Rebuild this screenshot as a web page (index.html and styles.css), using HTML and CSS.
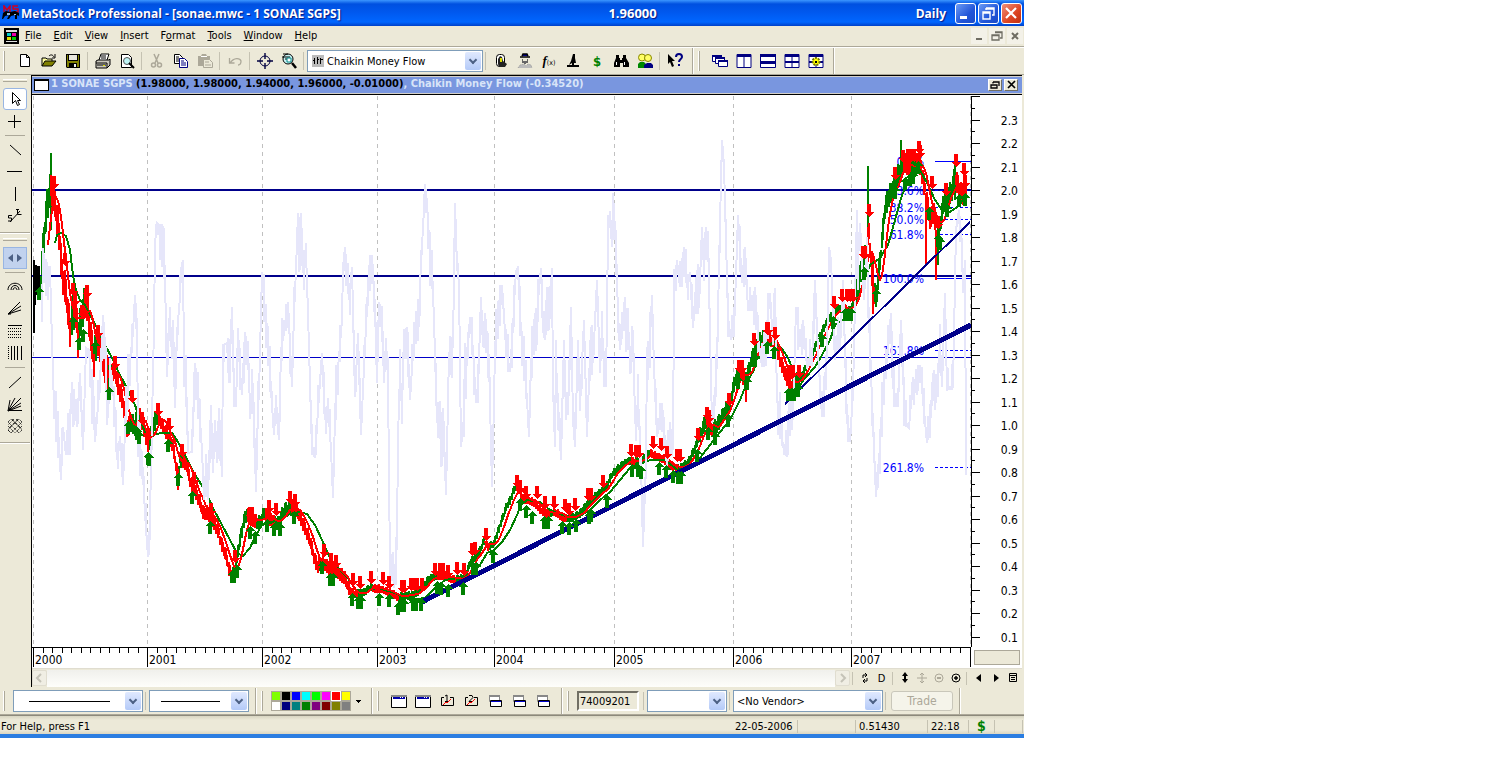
FILE: index.html
```html
<!DOCTYPE html>
<html lang="en">
<head>
	<meta charset="utf-8">
	<title>MetaStock Professional - [sonae.mwc - 1 SONAE SGPS]</title>
	<link rel="stylesheet" href="styles.css">
</head>
<body>
<div class="app">

	<!-- Title bar -->
	<header class="titlebar">
		<svg class="logo" viewBox="0 0 18 16"><path d="M2 7V1l3 4 3-4v6M16 1h-5v3h5v3h-5" fill="none" stroke="#d00020" stroke-width="1.500"/><path d="M1 8l3-2 4 1 5-1 4 2v3l-2-1v4h-2v-4l-4 1-2 3H5l2-4-4 1-2 3H0z" fill="#000"/><path d="M5 8h3v2H5zM12 9h2v1h-2z" fill="#9bd"/></svg>
		<h1>MetaStock Professional - [sonae.mwc - 1 SONAE SGPS]</h1>
		<span class="lastprice">1.96000</span>
		<span class="period">Daily</span>
		<div class="winbuttons">
			<button aria-label="Minimize"><svg viewBox="0 0 19 19"><path d="M4 12h7v3H4z" fill="#fff"/></svg></button>
			<button aria-label="Restore"><svg viewBox="0 0 19 19"><path d="M7 4h8v7h-2M7 4v2M7 5h8M4 8h7v7H4zM4 9h7" fill="none" stroke="#fff" stroke-width="1.4"/></svg></button>
			<button class="close" aria-label="Close"><svg viewBox="0 0 19 19"><path d="M4 4l10 10M14 4L4 14" stroke="#fff" stroke-width="2.2"/></svg></button>
		</div>
	</header>

	<!-- Menu -->
	<nav class="menubar">
		<svg class="docicon" viewBox="0 0 15 16"><path d="M0 0h15v16H0z" fill="#000"/><path d="M2 2h11v2H2zM2 13h11v1H2z" fill="#ddd"/><path d="M3 5h4v3H3z" fill="#0cc"/><path d="M8 5h4v3H8z" fill="#e0a"/><path d="M3 9h4v3H3z" fill="#dd0"/><path d="M8 9h4v3H8z" fill="#0c0"/></svg>
		<a href="#"><u>F</u>ile</a>
		<a href="#"><u>E</u>dit</a>
		<a href="#"><u>V</u>iew</a>
		<a href="#"><u>I</u>nsert</a>
		<a href="#">F<u>o</u>rmat</a>
		<a href="#"><u>T</u>ools</a>
		<a href="#"><u>W</u>indow</a>
		<a href="#"><u>H</u>elp</a>
		<div class="docbuttons">
			<button aria-label="Minimize document"><svg viewBox="0 0 16 16"><path d="M5 10h6v2H5z" fill="#6f6d63"/></svg></button>
			<button aria-label="Restore document"><svg viewBox="0 0 16 16"><path d="M6 4h7v6h-2M3 7h7v5H3zM6 4.500h7M3 7.500h7" fill="none" stroke="#6f6d63" stroke-width="1.300"/></svg></button>
			<button aria-label="Close document"><svg viewBox="0 0 16 16"><path d="M5 5l6 6M11 5l-6 6" stroke="#6f6d63" stroke-width="2"/></svg></button>
		</div>
	</nav>

	<!-- Main toolbar -->
	<div class="toolbar">
		<i class="grip"></i>
		<button aria-label="New"><svg viewBox="0 0 16 16"><path d="M3.500 1.500h6l3 3v9h-9zM9.500 1.500v3h3" fill="#fff" stroke="#000"/></svg></button>
		<button aria-label="Open"><svg viewBox="0 0 16 16"><path d="M1 13V5h4l1 1h5v2" fill="#ffffa0" stroke="#000"/><path d="M1 13l3-5h11l-4 5z" fill="#808000" stroke="#000"/><path d="M8 3c2-2 4-1 5 1M14 1v4h-3" fill="none" stroke="#000"/></svg></button>
		<button aria-label="Save"><svg viewBox="0 0 16 16"><path d="M1 1h14v14H2l-1-1z" fill="#000"/><path d="M2 2h1v6h10V2h1v12H2z" fill="#808000"/><path d="M4 2h8v5H4z" fill="#e8e6dc"/><path d="M4 10h8v4H4z" fill="#000"/><path d="M9 11h2v3H9z" fill="#eee"/></svg></button>
		<i class="sep"></i>
		<button aria-label="Print"><svg viewBox="0 0 16 16"><path d="M4 7l2-6h8l-2 6" fill="#fff" stroke="#000"/><path d="M6 3h5M6 5h5" stroke="#000"/><path d="M1 8l2-1h11l1-1v6l-3 3H1z" fill="#c8c6bc" stroke="#000"/><path d="M1 10h11v5M2 12h9" fill="none" stroke="#000"/><path d="M8 12h2v1H8z" fill="#dd0"/></svg></button>
		<button aria-label="Print preview"><svg viewBox="0 0 16 16"><path d="M2.500 1.500h7l3 3v10h-10z" fill="#fff" stroke="#000"/><circle cx="8" cy="8" r="3.500" fill="#bff4f4" stroke="#555"/><path d="M10 10l5 5" stroke="#000" stroke-width="2"/></svg></button>
		<i class="sep"></i>
		<button aria-label="Cut" disabled><svg viewBox="0 0 16 16"><path d="M5 1l4 9M10 1L6 10" stroke="#aca899" stroke-width="1.500"/><circle cx="4.500" cy="12" r="2" fill="none" stroke="#aca899" stroke-width="1.500"/><circle cx="10.500" cy="12" r="2" fill="none" stroke="#aca899" stroke-width="1.500"/></svg></button>
		<button aria-label="Copy"><svg viewBox="0 0 16 16"><path d="M1.500 1.500h5l3 3v6h-8z" fill="#fff" stroke="#000"/><path d="M3 4h3M3 6h4M3 8h4" stroke="#000"/><path d="M6.500 5.500h5l3 3v6h-8z" fill="#fff" stroke="#000080"/><path d="M8 8h3M8 10h5M8 12h5" stroke="#000080"/></svg></button>
		<button aria-label="Paste" disabled><svg viewBox="0 0 16 16"><path d="M1 3h3l1-2h4l1 2h3v10H1z" fill="#aca899"/><path d="M4 3h6v1H4z" fill="#fff"/><path d="M6.500 6.500h6l3 3v5h-9z" fill="#ece9d8" stroke="#aca899"/><path d="M8 9h4M8 12h6" stroke="#aca899"/></svg></button>
		<i class="sep"></i>
		<button aria-label="Undo" disabled><svg viewBox="0 0 16 16"><path d="M2.500 5v5h5M3 10c4-6 10-5 11-2 0 3-1 4-3 4" fill="none" stroke="#aca899" stroke-width="1.300"/></svg></button>
		<i class="sep"></i>
		<button aria-label="Choose period"><svg viewBox="0 0 16 16"><circle cx="8" cy="8" r="5" fill="none" stroke="#000040"/><path d="M8 0v6M8 10v6M0 8h6M10 8h6" stroke="#000040" stroke-width="1.400"/></svg></button>
		<button aria-label="Zoom chart"><svg viewBox="0 0 16 16"><circle cx="7" cy="6" r="5" fill="#c8f4f4" stroke="#000"/><path d="M2 1h5M1 4h8M4 6h6" stroke="#000"/><path d="M6 5h4v4H6z" fill="#fff" stroke="#088"/><path d="M11 10l4 5" stroke="#000" stroke-width="2.500"/></svg></button>
		<i class="sep"></i>
		<label class="combo indicator">
			<svg class="comboicon" viewBox="0 0 12 12"><path d="M0 0h12v12H0z" fill="#bbb"/><path d="M2.500 3v6M5.500 2v7M8.500 3v6M1 5.500h1M5 4.500h2M8 4.500h3" stroke="#000"/></svg>
			<select aria-label="Indicator"><option>Chaikin Money Flow</option></select>
		</label>
		<i class="sep"></i>
		<button aria-label="Expert advisor"><svg viewBox="0 0 16 16"><rect x="3.500" y="1.500" width="8" height="12" rx="3" fill="#fff" stroke="#000"/><path d="M5 6l2-3 2 1 1 4 4 3-2 3H6l-1-3z" fill="#222"/><path d="M7 5h2v4H7z" fill="#dd0"/></svg></button>
		<button aria-label="Explorer"><svg viewBox="0 0 16 16"><path d="M3 4h10M5 3l1-2h4l1 2" fill="#000080" stroke="#000" stroke-width="1.500"/><path d="M5 6h1v2h4V6h1v4H9v1H7v-1H5z" fill="#666"/><path d="M1 15l2-3 4-1 2 2 2-2 3 1 1 3" fill="#bbb" stroke="#999" stroke-dasharray="1 1"/></svg></button>
		<button aria-label="Indicator builder" class="fx"><em>f</em><small>(x)</small></button>
		<button aria-label="System tester"><svg viewBox="0 0 16 16"><path d="M8 1h2v4l1 5H7l-3 2 2-4zM2 14v-2h5v-2h2v2h5v2z" fill="#000"/></svg></button>
		<button aria-label="Online data" class="dollar">$</button>
		<button aria-label="Find"><svg viewBox="0 0 16 16"><path d="M3 2h3v3h1v2h2V5h1V2h3v3l3 5v4h-6v-4H7v4H1v-4l2-5z" fill="#000"/><path d="M3 9h1v3H3zM11 9h1v3h-1z" fill="#fff"/></svg></button>
		<button aria-label="Community"><svg viewBox="0 0 16 16"><circle cx="5" cy="4.500" r="3.500" fill="#ff6" stroke="#880"/><circle cx="11" cy="5" r="3.500" fill="#ff6" stroke="#880"/><path d="M1 15v-4l2-2h4l2 2v4z" fill="#080"/><path d="M7 15v-3l3-2h4l2 2v3z" fill="#000080"/></svg></button>
		<i class="sep"></i>
		<button aria-label="Context help"><svg viewBox="0 0 16 16"><path d="M1 1l7 7H5l2 5-2 1-2-5-2 2z" fill="#000"/><path d="M9 4c0-4 6-4 6 0 0 2-3 2-3 5M12 11v2" fill="none" stroke="#000080" stroke-width="2"/></svg></button>
		<i class="divider"></i>
		<i class="grip"></i>
		<button aria-label="Cascade"><svg viewBox="0 0 16 16"><path d="M.5 2.500h9v6h-9z" fill="#fff" stroke="#000080"/><path d="M0 2h10v2H0z" fill="#000080"/><path d="M3.500 4.500h9v6h-9z" fill="#fff" stroke="#000080"/><path d="M3 4h10v2H3z" fill="#000080"/><path d="M6.500 7.500h9v6h-9z" fill="#fff" stroke="#000080"/><path d="M6 7h10v2H6z" fill="#000080"/></svg></button>
		<button aria-label="Tile columns"><svg viewBox="0 0 16 16"><path d="M1 1.500h14v13H1zM8 2v12" fill="#fff" stroke="#000080"/><path d="M1 1h14v3H1z" fill="#000080"/></svg></button>
		<button aria-label="Tile rows"><svg viewBox="0 0 16 16"><path d="M.5 1.500h15v13H.5z" fill="#fff" stroke="#000080"/><path d="M0 1h16v3H0zM0 8h16v3H0z" fill="#000080"/></svg></button>
		<button aria-label="Tile grid"><svg viewBox="0 0 16 16"><path d="M1 1.500h14v13H1zM8 2v12" fill="#fff" stroke="#000080"/><path d="M1 1h14v3H1zM1 8h14v2H1z" fill="#000080"/></svg></button>
		<button aria-label="Layout options"><svg viewBox="0 0 16 16"><path d="M1 1.500h14v13H1zM8 2v12" fill="#fff" stroke="#000080"/><path d="M1 1h14v3H1zM1 8h14v2H1z" fill="#000080"/><circle cx="8" cy="8.500" r="3.500" fill="#ff0" stroke="#770" stroke-width="2" stroke-dasharray="2 1"/><path d="M7 8h2v2H7z" fill="#000"/></svg></button>
		<i class="divider"></i>
	</div>

	<div class="workspace">

		<!-- Drawing tools -->
		<aside class="tools">
			<i class="hgrip"></i>
			<button class="active" aria-label="Pointer"><svg viewBox="0 0 16 16"><path d="M5.500 1.500v11l3-3 2 5 2-1-2-4h3z" fill="#fff" stroke="#000"/></svg></button>
			<button aria-label="Crosshair"><svg viewBox="0 0 16 16"><path d="M7.500 2v13M1 8.500h13" stroke="#000"/></svg></button>
			<i class="hsep"></i>
			<button aria-label="Trendline down"><svg viewBox="0 0 16 16"><path d="M3 3l11 10" stroke="#000"/></svg></button>
			<button aria-label="Horizontal line"><svg viewBox="0 0 16 16"><path d="M0 7.500h15" stroke="#000"/></svg></button>
			<button aria-label="Vertical line"><svg viewBox="0 0 16 16"><path d="M8.500 1v14" stroke="#000"/></svg></button>
			<button aria-label="Stop loss"><svg viewBox="0 0 16 16"><path d="M3 14L13 3M5 7.500H1.500v2.500h3v3H1M10.500 1v5.500h4M9 1.500h3" fill="none" stroke="#000"/></svg></button>
			<i class="hdivider"></i>
			<i class="hgrip"></i>
			<button class="pressed" aria-label="Pan"><svg viewBox="0 0 16 16"><path d="M6 4v8L1 8zM10 4v8l5-4z" fill="#4d6185"/></svg></button>
			<i class="hsep"></i>
			<button aria-label="Fibonacci arcs"><svg viewBox="0 0 16 16"><path d="M1 11c0-9 14-9 14 0M4 11c0-6 8-6 8 0M6 11c0-3 4-3 4 0" fill="none" stroke="#000"/></svg></button>
			<button aria-label="Fibonacci fan"><svg viewBox="0 0 16 16"><path d="M1 13L13 1M1 13l13-8M1 13l13-4M1 13h3" stroke="#000"/></svg></button>
			<button aria-label="Fibonacci retracement"><svg viewBox="0 0 16 16"><path d="M1 2.500h14" stroke="#000"/><path d="M1 5.500h14M1 8.500h14M1 11.500h14M1 14.500h14" stroke="#000" stroke-dasharray="1 1"/></svg></button>
			<button aria-label="Time zones"><svg viewBox="0 0 16 16"><path d="M1.500 1v14" stroke="#000" stroke-dasharray="1 1"/><path d="M4.500 1v14M7.500 1v14M10.500 1v14M14.500 1v14" stroke="#000"/></svg></button>
			<i class="hsep"></i>
			<button aria-label="Gann line"><svg viewBox="0 0 16 16"><path d="M2 14L14 3" stroke="#000"/></svg></button>
			<button aria-label="Gann fan"><svg viewBox="0 0 16 16"><path d="M1 15L3 4M1 15L8 2M1 15L14 2M1 15l13-8M1 15l13-5M1 14.500h14" stroke="#000"/></svg></button>
			<button aria-label="Gann grid"><svg viewBox="0 0 16 16"><path d="M1 4l3-3 11 11-3 3L1 4M5 1l10 10M1 8l7 7M1 12l3 3M9 1l6 6M15 4l-3-3L1 12l3 3L15 4M11 1L1 11M15 8l-7 7M7 1L1 7" fill="none" stroke="#000" stroke-dasharray="1 1"/></svg></button>
			<i class="hdivider"></i>
		</aside>

		<!-- Chart window -->
		<main class="mdi">
			<div class="charttitle">
				<i class="wicon"></i>
				<h2>1 SONAE SGPS <b>(1.98000, 1.98000, 1.94000, 1.96000, -0.01000)</b>, Chaikin Money Flow (-0.34520)</h2>
				<button aria-label="Restore chart"><svg viewBox="0 0 12 10"><path d="M4 2h6v4M2 5h6v3H2zM4 3.500V2" fill="none" stroke="#000" stroke-width="1.300"/></svg></button>
				<button aria-label="Close chart"><svg viewBox="0 0 12 10"><path d="M3 1l7 7M10 1L3 8" stroke="#000" stroke-width="1.700"/></svg></button>
			</div>

			<svg id="chart" class="chart" viewBox="32 95 990 573">
				<g id="grid"></g>
				<path class="level" d="M32 190H971M32 276H971"/>
				<path class="zero" d="M32 357.500H971"/>
				<g id="fib"></g>
				<g id="prices"></g>
				<g id="flow"></g>
				<path class="trendthin" d="M785 404L970 222"/>
				<path class="trend" d="M420 603L971 325"/>
				<g id="arrows"></g>
				<g id="axes"></g>
			</svg>

			<div class="scrollrow">
				<button class="scroll" aria-label="Scroll left" disabled><svg viewBox="0 0 12 12"><path d="M7 2L3 6l4 4" fill="none" stroke="#c5c3b8" stroke-width="2"/></svg></button>
				<div class="track"></div>
				<button class="scroll" aria-label="Scroll right" disabled><svg viewBox="0 0 12 12"><path d="M4 2l4 4-4 4" fill="none" stroke="#c5c3b8" stroke-width="2"/></svg></button>
				<i class="sep"></i>
				<button aria-label="Refresh"><svg viewBox="0 0 12 12"><path d="M4 6V3h4M6 1l2 2-2 2M8 6v3H4M6 7L4 9l2 2" fill="none" stroke="#000"/></svg></button>
				<button aria-label="Periodicity: daily">D</button>
				<i class="sep"></i>
				<button aria-label="Rescale"><svg viewBox="0 0 12 12"><path d="M6 0l3 4H7v3h2l-3 4-3-4h2V4H3z" fill="#000"/></svg></button>
				<button aria-label="Move" disabled><svg viewBox="0 0 12 12"><path d="M6 1v10M1 6h10M4 3l2-2 2 2M4 9l2 2 2-2" fill="none" stroke="#aca899"/></svg></button>
				<button aria-label="Zoom out" disabled><svg viewBox="0 0 12 12"><circle cx="6" cy="6" r="4" fill="none" stroke="#aca899"/><path d="M4 6h4" stroke="#aca899" stroke-width="2"/></svg></button>
				<button aria-label="Zoom in"><svg viewBox="0 0 12 12"><circle cx="6" cy="6" r="4" fill="none" stroke="#000"/><path d="M4 6h4M6 4v4" stroke="#000" stroke-width="1.500"/></svg></button>
				<i class="sep"></i>
				<button aria-label="Previous security"><svg viewBox="0 0 12 12"><path d="M8 2v8L3 6z" fill="#000"/></svg></button>
				<button aria-label="Next security"><svg viewBox="0 0 12 12"><path d="M4 2v8l5-4z" fill="#000"/></svg></button>
				<button aria-label="Chart options"><svg viewBox="0 0 12 12"><path d="M2.500 1.500h7v8h-7zM2 3.500h8M4 5.500h4M4 7.500h4" fill="none" stroke="#000"/></svg></button>
			</div>
		</main>
	</div>

	<!-- Bottom toolbar -->
	<div class="toolbar bottom">
		<i class="grip"></i>
		<label class="combo linestyle"><select aria-label="Line style"><option></option></select></label>
		<i class="sep"></i>
		<label class="combo linewidth"><select aria-label="Line width"><option></option></select></label>
		<i class="divider"></i>
		<i class="grip"></i>
		<div class="palette" id="palette"></div>
		<button class="caret" aria-label="More colors"></button>
		<i class="divider"></i>
		<i class="grip"></i>
		<button aria-label="Chart window"><svg viewBox="0 0 16 16"><path d="M.5 2.500h15v12H.5z" fill="#fff" stroke="#000"/><path d="M0 2h16v2H0z" fill="#888"/><path d="M2 4h12v2H2z" fill="#00a"/><path d="M9 4h1v1H9zM11 4h1v1h-1z" fill="#fff"/></svg></button>
		<button aria-label="Data window"><svg viewBox="0 0 16 16"><path d="M.5 2.500h15v12H.5z" fill="#fff" stroke="#000"/><path d="M0 2h16v2H0z" fill="#888"/><path d="M2 4h12v2H2z" fill="#00a"/><path d="M9 4h1v1H9zM11 4h1v1h-1z" fill="#fff"/></svg></button>
		<button aria-label="Template 1"><svg viewBox="0 0 16 16"><path d="M5 4.500H2.500v8h12v-8H11M6 3l2-1v6M6 8.500h4" fill="none" stroke="#000"/><path d="M4 12l3-3 1 1 4-4" fill="none" stroke="red"/></svg></button>
		<button aria-label="Template 2"><svg viewBox="0 0 16 16"><path d="M5 4.500H2.500v8h12v-8H11M6 2.500h3l1 2-4 4h4" fill="none" stroke="#000"/><path d="M4 12l3-3 1 1 4-4" fill="none" stroke="red"/></svg></button>
		<button aria-label="Inner window 1"><svg viewBox="0 0 16 16"><path d="M2.500 2.500h10v6h-10z" fill="#fff" stroke="#888"/><path d="M2 2h11v2H2z" fill="#888"/><path d="M3.500 7.500h11v6h-11z" fill="#fff" stroke="#000"/><path d="M4 8h10v1H4z" fill="#00c"/></svg></button>
		<button aria-label="Inner window 2"><svg viewBox="0 0 16 16"><path d="M2.500 2.500h10v6h-10z" fill="#fff" stroke="#888"/><path d="M2 2h11v2H2z" fill="#888"/><path d="M3.500 7.500h11v6h-11z" fill="#fff" stroke="#000"/><path d="M4 8h10v1H4z" fill="#00c"/></svg></button>
		<button aria-label="Inner window 3"><svg viewBox="0 0 16 16"><path d="M2.500 2.500h10v6h-10z" fill="#fff" stroke="#888"/><path d="M2 2h11v2H2z" fill="#888"/><path d="M3.500 7.500h11v6h-11z" fill="#fff" stroke="#000"/><path d="M4 8h10v1H4z" fill="#00c"/></svg></button>
		<i class="divider"></i>
		<i class="grip"></i>
		<input class="volume" type="text" value="74009201" aria-label="Volume" readonly>
		<i class="sep"></i>
		<label class="combo symbol"><select aria-label="Symbol"><option></option></select></label>
		<i class="sep"></i>
		<label class="combo vendor"><select aria-label="Vendor"><option>&lt;No Vendor&gt;</option></select></label>
		<i class="sep"></i>
		<button class="trade" disabled>Trade</button>
		<i class="divider"></i>
	</div>

	<!-- Status bar -->
	<footer class="statusbar">
		<span class="help">For Help, press F1</span>
		<span class="date">22-05-2006</span>
		<span class="blank"></span>
		<span class="value">0.51430</span>
		<span class="time">22:18</span>
		<span class="online">$</span>
		<span class="end"></span>
	</footer>
</div>

<script src="script.js"></script>
</body>
</html>
```
FILE: styles.css
```css
body
{
	margin: 0;
	background-color: white;
	font-family: "DejaVu Sans Condensed", "DejaVu Sans", sans-serif;
	font-size: 11px;
	color: black;
}
.app
{
	max-width: 1024px;
	background-color: #ece9d8;
	border-bottom: 4px solid #2a7de1;
}
button
{
	font: inherit;
	padding: 0;
	margin: 0;
	border: 0;
	background: none;
}
svg
{
	display: block;
}
h1, h2
{
	margin: 0;
	white-space: nowrap;
}

/*
	Title bar
*/
.titlebar
{
	display: flex;
	align-items: center;
	height: 26px;
	padding: 0 2px;
	box-sizing: border-box;
	color: white;
	font-family: "Open Sans", "Noto Sans", sans-serif;
	font-weight: bold;
	font-size: 12px;
	text-shadow: 1px 1px 1px #0a1883;
	background: linear-gradient(#3c96ff, #0050e0 4px, #0058ee 12px, #0066ff 22px, #0040c8);
}
.logo
{
	width: 18px;
	height: 16px;
	margin-right: 1px;
	flex: none;
}
.titlebar h1
{
	font-size: 12px;
	flex: 0 0 57%;
}
.lastprice
{
	font-size: 13px;
	padding-left: 6px;
}
.period
{
	flex: 1;
	text-align: right;
	margin-right: 9px;
}
.winbuttons
{
	display: flex;
	gap: 2px;
}
.winbuttons button
{
	width: 21px;
	height: 21px;
	border: 1px solid white;
	border-radius: 3px;
	background: linear-gradient(135deg, #6b9bf5, #2155d8 60%, #1a4bc8);
}
.winbuttons .close
{
	background: linear-gradient(135deg, #f0907a, #dc4421 60%, #c03010);
}

/*
	Menu
*/
.menubar
{
	display: flex;
	align-items: center;
	height: 20px;
	padding-left: 4px;
	border-bottom: 1px solid #aca899;
}
.docicon
{
	width: 15px;
	height: 16px;
}
.menubar a
{
	padding: 0 6px 2px;
	color: black;
	text-decoration: none;
}
.docbuttons
{
	display: flex;
	gap: 2px;
	margin-left: auto;
	margin-right: 1px;
}
.docbuttons button
{
	width: 16px;
	height: 16px;
	background-color: #f3f1e8;
}

/*
	Toolbars
*/
.toolbar
{
	display: flex;
	align-items: center;
	height: 26px;
	padding-left: 3px;
	border-top: 1px solid white;
	border-bottom: 1px solid #aca899;
}
.toolbar > button
{
	width: 24px;
	height: 22px;
	flex: none;
}
.toolbar > button svg
{
	width: 16px;
	height: 16px;
	margin: auto;
}
.grip
{
	width: 2px;
	height: 20px;
	margin-right: 8px;
	border-right: 1px solid #aca899;
	background-color: white;
	box-sizing: border-box;
	flex: none;
}
.sep
{
	width: 1px;
	height: 18px;
	margin: 0 3px 0 2px;
	background-color: #c5c2b2;
	flex: none;
}
.divider
{
	width: 2px;
	height: 26px;
	margin: 0 4px 0 5px;
	box-sizing: border-box;
	border-left: 1px solid #aca899;
	background-color: white;
	flex: none;
}
.fx em
{
	font: italic bold 13px "Liberation Serif", serif;
}
.fx small
{
	font-size: 7px;
}
.dollar
{
	color: green;
	font-weight: bold;
	font-size: 13px;
}
.combo
{
	display: flex;
	align-items: center;
	box-sizing: border-box;
	height: 22px;
	border: 1px solid #7f9db9;
	background-color: white;
	position: relative;
	flex: none;
}
.combo select
{
	appearance: none;
	width: 100%;
	height: 18px;
	border: 0;
	padding: 0 18px 0 3px;
	background: none;
	font: inherit;
	color: black;
}
.combo::after
{
	content: "";
	position: absolute;
	right: 1px;
	top: 1px;
	width: 16px;
	height: 18px;
	border-radius: 2px;
	background: linear-gradient(#e0e9fe, #b4caf8);
	pointer-events: none;
}
.combo::before
{
	content: "";
	position: absolute;
	z-index: 1;
	right: 6px;
	top: 6px;
	width: 4px;
	height: 4px;
	border: solid #4d6185;
	border-width: 0 2px 2px 0;
	transform: rotate(45deg);
	pointer-events: none;
}
.comboicon
{
	width: 12px;
	height: 12px;
	margin-left: 4px;
	flex: none;
}
.indicator
{
	width: 176px;
}
.linestyle
{
	width: 130px;
}
.linewidth
{
	width: 100px;
}
.linestyle select
{
	background: linear-gradient(black, black) 15px 50% / 81px 1px no-repeat;
}
.linewidth select
{
	background: linear-gradient(black, black) 11px 50% / 59px 1px no-repeat;
}
.symbol
{
	width: 80px;
}
.vendor
{
	width: 150px;
}

/*
	Drawing tools
*/
.workspace
{
	display: flex;
}
.tools
{
	width: 31px;
	box-sizing: border-box;
	padding-right: 1px;
	flex: none;
	display: flex;
	flex-direction: column;
	align-items: center;
}
.tools button
{
	width: 24px;
	height: 22px;
	box-sizing: border-box;
	flex: none;
}
.tools svg
{
	width: 16px;
	height: 16px;
	margin: auto;
}
.tools .active
{
	border: 1px solid #98b5e2;
	border-radius: 3px;
	background-color: white;
}
.tools .pressed
{
	border: 1px solid #98b5e2;
	background-color: #c1d2ee;
}
.hgrip
{
	width: 24px;
	height: 3px;
	margin: 4px 0 6px;
	box-sizing: border-box;
	border-top: 1px solid white;
	border-bottom: 1px solid #aca899;
}
.hsep
{
	width: 20px;
	height: 1px;
	margin: 3px 0;
	background-color: #aca899;
}
.hdivider
{
	align-self: stretch;
	height: 1px;
	margin-top: 5px;
	background-color: #aca899;
	border-bottom: 1px solid white;
}

/*
	Chart window
*/
.mdi
{
	flex: 1;
	min-width: 0;
	border-left: 1px solid black;
	border-top: 1px solid black;
	margin-right: 2px;
}
.charttitle
{
	display: flex;
	align-items: center;
	gap: 2px;
	height: 16px;
	padding: 0 4px 0 2px;
	border: solid #d4d0c8;
	border-width: 1px 0;
	background-color: #7996df;
	box-shadow: 0 1px 0 black;
	margin-bottom: 1px;
}
.charttitle h2
{
	flex: 1;
	font-size: 11px;
	line-height: 14px;
	padding-bottom: 2px;
	color: #d8e4f8;
}
.charttitle b
{
	color: black;
}
.wicon
{
	width: 13px;
	height: 9px;
	border: 1px solid black;
	border-top-width: 2px;
	background-color: white;
}
.charttitle button
{
	width: 14px;
	height: 12px;
	border: 1px solid;
	border-color: white #716f64 #716f64 white;
	background-color: #ece9d8;
}
.chart
{
	width: 100%;
	height: auto;
	background-color: white;
	shape-rendering: crispEdges;
	font-size: 12px;
}
.gridline
{
	stroke: #c0c0c0;
	stroke-dasharray: 4 4;
}
.level
{
	stroke: #00008b;
	stroke-width: 2;
}
.zero
{
	stroke: #0000c8;
}
.trend
{
	stroke: #00008b;
	stroke-width: 5;
}
.trendthin
{
	stroke: #00008b;
	stroke-width: 2;
}
.fibline
{
	stroke: #0000ff;
}
.dashed
{
	stroke-dasharray: 3 2;
}
.fibtext
{
	fill: #0000ff;
	text-anchor: end;
}
.scaletext
{
	text-anchor: end;
}
.axis
{
	stroke: black;
	fill: none;
}
.axiscorner
{
	fill: #ece9d8;
	stroke: #aca899;
}
.line
{
	fill: none;
	stroke-width: 2;
}
.flowline
{
	stroke: #e6e6fa;
}
.up
{
	stroke: #008000;
}
.down
{
	stroke: #ff0000;
}
.start
{
	stroke: #000000;
}
.buy
{
	fill: #008000;
}
.sell
{
	fill: #ff0000;
}

/*
	Scroll bar and chart buttons
*/
.scrollrow
{
	display: flex;
	align-items: center;
	height: 18px;
	padding-right: 1px;
	border-top: 1px solid #e0ddd0;
}
.scrollrow button
{
	width: 17px;
	height: 16px;
}
.scrollrow svg
{
	width: 12px;
	height: 12px;
	margin: auto;
}
.scrollrow .scroll
{
	width: 15px;
	border: 1px solid #e0ddd0;
	border-radius: 2px;
	background-color: #f0eee4;
	box-sizing: border-box;
}
.track
{
	flex: 1;
	height: 17px;
	background: linear-gradient(#f0f0ec, #fefefb);
}
.scrollrow .sep
{
	height: 13px;
}

/*
	Bottom toolbar
*/
.bottom
{
	border-top-color: #ece9d8;
}
.bottom .divider
{
	margin-left: 6px;
}
.palette
{
	display: grid;
	grid-template-columns: repeat(8, 10px);
	grid-auto-rows: 10px;
}
.palette button
{
	border: 1px solid #aca899;
	box-sizing: border-box;
	width: 10px;
	height: 10px;
}
.palette .selected
{
	border-color: white;
}
.toolbar > .caret
{
	width: 14px;
	height: 3px;
	background: linear-gradient(black, black) 5px 0 / 5px 1px no-repeat, linear-gradient(black, black) 6px 1px / 3px 1px no-repeat, linear-gradient(black, black) 7px 2px / 1px 1px no-repeat;
}
.volume
{
	box-sizing: border-box;
	width: 62px;
	height: 20px;
	margin-right: 2px;
	padding: 0 1px;
	border: 2px solid;
	border-color: #716f64 white white #716f64;
	background-color: #ece9d8;
	font: inherit;
}
.toolbar > .trade
{
	width: 62px;
	height: 20px;
	margin-left: 2px;
	border: 1px solid #c9c7ba;
	border-radius: 3px;
	background-color: #f5f4ea;
	color: #aca899;
	font-size: 12px;
}

/*
	Status bar
*/
.statusbar
{
	display: flex;
	align-items: center;
	height: 16px;
	padding-top: 2px;
	border-top: 1px solid #8c897b;
	background: linear-gradient(#d8d5c2, #ece9d8 4px, #ece9d8 14px, #dad6c2);
}
.statusbar span
{
	box-sizing: border-box;
	height: 13px;
	line-height: 13px;
	padding-left: 3px;
	border-right: 1px solid #c5c2b2;
}
.statusbar .help
{
	flex: 1;
	padding-left: 1px;
	border: 0;
}
.date
{
	width: 66px;
}
.blank
{
	width: 58px;
}
.value
{
	width: 72px;
}
.time
{
	width: 41px;
}
.statusbar .online
{
	width: 26px;
	padding: 0;
	text-align: center;
	color: green;
	font-weight: bold;
	font-size: 14px;
}
.end
{
	width: 28px;
	margin-right: 1px;
}

```
FILE: script.js
```js
var	svgNS = 'http://www.w3.org/2000/svg'

function	add(parent, name, attributes, text)
{
	var n = document.createElementNS(svgNS, name)
	for (var a in attributes) n.setAttribute(a, attributes[a])
	if (text !== undefined) n.textContent = text
	document.getElementById(parent).appendChild(n)
}

// 'x,y x,y ...' to an array of points
function	points(str)
{
	return	str.trim().split(/\s+/).map(function (p) { return p.split(',').map(Number) })
}

// Interpolated y at x
function	valueAt(list, x)
{
	for (var i=1; i<list.length-1; i++)
		if (list[i][0] >= x)	break
	var a = list[i-1], b = list[i]
	if (a[0] == b[0])	return	b[1]
	return	a[1] + (b[1]-a[1]) * (x-a[0]) / (b[0]-a[0])
}


//
// Axes and grid
//
var	years = [33, 147, 262, 377, 494, 614, 733, 851, 970]
var	d = 'M32 647.5H971M970.5 647V667M971.5 96V647'
for (var i=0; i<years.length; i++)
{
	add('grid', 'path', { class: 'gridline', d: 'M' + (years[i]+.5) + ' 96V647' })
	if (i == 8)	break
	d += 'M' + (years[i]+.5) + ' 647V667'
	for (var m=1; m<12; m++)
		d += 'M' + (Math.round(years[i] + (years[i+1]-years[i])*m/12)+.5) + ' 648V653'
	add('axes', 'text', { x: years[i]+2, y: 664 }, 2000+i)
}
for (var i=0; i<=46; i++)
{
	var y = Math.round(96 + i*11.75) + .5
	d += 'M971 ' + y + 'h' + (i%2 ? 4 : 9)
	if (i%2 == 0 && i > 0)
		add('axes', 'text', { class: 'scaletext', x: 1018, y: y+4 }, (2.4 - i/20).toFixed(1))
}
add('axes', 'path', { class: 'axis', d: d })
add('axes', 'rect', { class: 'axiscorner', x: 974.5, y: 650.5, width: 45, height: 14 })


//
// Fibonacci levels
//
var	levels = [['0.0%', 161], ['23.6%', 190], ['38.2%', 207], ['50.0%', 219], ['61.8%', 234], ['100.0%', 278], ['161.8%', 350], ['261.8%', 467]]
levels.forEach(function (l)
{
	var solid = l[0] == '0.0%' || l[0] == '100.0%'
	add('fib', 'text', { class: 'fibtext', x: 924, y: l[1]+5 }, l[0])
	add('fib', 'path', { class: solid ? 'fibline' : 'fibline dashed', d: 'M935 ' + (l[1]+.5) + 'H971' })
})


//
// Chaikin money flow
//
var	flow = '42,322 43,248 45,270 47,262 49,283 50,268 52,342 54,405 58,428 61,480 63,427 66,455 67,430 69,447 72,382 73,427 75,402 77,427 80,373 83,450 86,348 89,350 92,395 93,380 95,442 100,382 103,315 106,358 107,425 111,370 115,412 117,460 120,437 123,485 126,403 128,380 130,362 133,332 135,295 137,325 138,437 142,457 145,513 148,557 149,552 151,470 153,373 154,327 155,243 157,223 160,227 160,260 163,226 165,277 167,377 170,307 171,347 173,320 175,408 177,333 180,297 181,270 183,260 184,360 186,377 188,453 192,452 195,363 198,390 202,450 204,500 207,463 208,495 211,405 213,473 215,420 217,463 219,408 222,477 223,345 227,343 229,383 232,307 234,393 236,407 238,328 240,373 242,395 245,332 249,367 250,417 253,383 256,492 258,407 259,393 262,272 264,300 268,337 271,390 274,435 276,400 279,440 281,350 284,333 288,302 292,387 294,313 296,270 298,213 299,272 301,213 303,273 306,253 308,313 310,383 312,450 315,458 318,410 322,353 325,420 328,403 331,450 333,498 335,417 336,390 339,357 342,320 343,267 345,247 349,300 352,267 355,397 358,333 361,435 364,367 366,327 369,267 372,255 375,307 377,383 379,302 382,313 384,383 386,340 388,380 390,567 393,552 394,588 397,543 398,437 400,373 402,410 404,333 407,327 410,400 413,353 416,317 419,327 421,257 423,230 425,184 427,203 430,257 432,267 434,320 437,423 440,410 441,467 443,408 446,495 448,403 449,353 453,347 455,203 457,267 459,283 461,447 464,417 465,343 466,373 470,317 473,350 476,403 478,390 481,297 483,347 485,313 489,360 492,487 494,403 495,347 498,310 502,285 506,347 510,372 514,310 515,282 518,266 521,333 523,340 527,400 529,437 531,363 535,313 537,345 538,300 541,268 543,330 545,340 547,287 549,330 552,268 553,387 555,447 556,363 561,460 564,340 566,415 568,414 571,307 573,420 575,447 578,340 580,407 584,320 587,437 591,327 593,363 597,280 600,373 602,327 604,370 606,387 608,233 610,215 612,247 613,193 616,247 618,313 620,350 625,297 627,347 628,323 631,373 633,330 635,417 636,430 638,397 641,463 643,547 646,463 647,347 649,360 652,295 654,367 657,437 662,403 667,467 670,433 673,450 674,293 677,260 680,287 684,247 687,288 690,272 693,328 697,270 699,308 702,227 704,270 705,233 708,232 710,333 712,423 714,415 717,360 719,267 721,180 722,140 724,165 726,240 728,317 731,340 734,330 737,247 738,215 742,283 745,247 748,310 752,310 755,287 758,337 762,367 765,347 770,293 773,345 775,288 777,400 780,417 783,447 787,457 789,403 793,420 796,307 800,347 803,320 807,367 812,363 815,280 818,353 822,417 827,353 829,247 831,260 835,360 838,330 840,350 843,280 847,420 850,442 853,393 857,210 858,260 860,223 864,300 867,237 868,293 872,400 876,497 880,447 883,387 887,360 891,313 893,387 898,407 901,320 905,423 909,428 913,377 917,395 920,365 923,400 927,443 930,427 933,373 935,410 940,343 942,387 945,293 947,390 953,387 956,230 959,210 962,243 963,293 965,260 966,475'
var	flowPoints = points(flow)
var	flowBars = ''
for (var x=44; x<964; x+=2)
{
	var y = valueAt(flowPoints, x)
	// Stay inside the range of the neighbouring days
	var near = [-4, -2, 0, 2, 4].map(function (k) { return valueAt(flowPoints, x+k) })
	var high = Math.max(Math.min.apply(null, near), y - 26*Math.abs(Math.sin(x*2.1)))
	var low = Math.min(Math.max.apply(null, near), y + 30*Math.abs(Math.cos(x*1.3)))
	flowBars += 'M' + x + ' ' + Math.round(high) + 'V' + Math.round(low)
}
add('flow', 'path', { class: 'line flowline', d: flowBars })
add('flow', 'polyline', { class: 'line flowline', points: flow })


//
// Prices : daily bars around a middle value, with a fast and a slow average
//
var	mid = points('34,295 36,280 38,275 40,290 43,250 45,225 47,205 50,190 53,190 56,210 60,240 62,275 64,280 67,300 70,330 73,310 75,300 78,335 83,310 86,295 90,330 94,360 97,335 100,345 103,360 107,375 110,372 115,370 118,385 123,400 127,430 131,422 135,425 138,415 142,420 145,430 149,445 152,432 156,417 158,412 162,425 168,435 173,445 176,465 178,475 180,460 183,460 187,465 190,480 195,490 200,502 203,512 208,512 212,520 218,530 222,545 226,555 230,572 233,574 236,565 238,550 241,535 244,520 247,513 250,519 255,520 260,522 264,513 268,516 272,521 278,523 284,510 290,507 295,508 300,516 304,525 310,540 315,560 318,565 323,562 330,568 338,571 345,578 350,590 356,594 362,593 370,587 378,588 385,590 392,593 398,597 405,595 412,595 420,590 428,580 436,575 445,576 455,579 462,578 466,575 470,562 475,557 480,550 484,540 488,546 494,543 500,525 506,507 510,500 515,487 518,487 522,497 527,500 535,502 540,510 548,513 556,512 565,518 573,517 580,513 586,505 594,497 600,492 606,487 612,474 618,468 624,463 630,460 636,461 642,460 650,452 655,455 665,460 672,466 680,468 688,462 694,450 700,435 706,420 712,430 718,423 725,412 730,402 735,380 740,370 745,380 750,367 754,350 760,340 766,335 772,340 777,348 782,365 787,378 792,385 797,380 802,375 810,358 818,340 825,325 832,314 838,308 845,308 850,310 855,300 860,275 863,262 867,245 869,230 871,260 873,290 876,295 879,270 882,240 885,208 889,195 895,185 901,165 903,162 910,168 916,165 919,160 922,172 926,195 930,220 934,210 937,235 940,225 944,200 948,195 952,190 955,175 958,185 962,195 965,190 967,198')
var	slow = '55,243 57,235 61,233 66,236 70,250 73,275 76,290 80,300 85,305 90,315 97,328 105,345 112,358 120,375 128,390 135,405 140,420 145,432 153,434 165,433 172,433 178,442 185,455 195,475 205,490 213,508 222,525 230,540 237,553 243,556 250,548 256,535 262,525 272,522 282,519 290,514 300,512 307,514 315,525 322,540 332,562 340,570 348,578 356,590 365,590 378,588 395,593 410,600 425,598 435,588 445,580 458,578 468,575 480,565 487,553 494,550 502,542 510,530 517,515 521,505 527,500 540,502 550,510 565,516 578,517 590,510 600,500 610,492 620,480 630,468 640,464 650,460 665,460 680,472 690,468 700,458 710,445 720,432 730,420 740,400 748,380 754,370 757,358 763,355 768,345 775,342 783,350 788,358 793,370 800,385 805,378 815,367 822,355 830,340 835,325 845,318 860,292 870,265 880,258 888,245 895,220 902,195 910,178 920,170 928,185 935,200 942,210 950,212 960,205 965,195'

var	bars = { start: '', up: '', down: '' }
for (var x=34; x<967; x++)
{
	var y = valueAt(mid, x)
	var range = x < 110 ? 17 : x < 160 ? 10 : x < 350 ? 7 : x < 700 ? 4 : x < 800 ? 8 : x < 855 ? 4 : 11
	var kind = x < 41 ? 'start' : valueAt(mid, x+4) > valueAt(mid, x-3) ? 'down' : 'up'
	var high = Math.round(y - range * Math.abs(Math.sin(x*2.3)))
	var low = Math.round(y + range * Math.abs(Math.cos(x*1.7)))
	bars[kind] += 'M' + x + ' ' + high + 'V' + (low+1)
}
bars.start += 'M34 260V333'
bars.up += 'M51 153V230M868 166V240M901 140V170M938 235V265M955 160V200'
bars.down += 'M78 330V358M94 350V373M873 255V314M926 200V266M936 230V280M746 380V402M178 470V490'
for (var kind in bars)
	add('prices', 'path', { class: 'line ' + kind, d: bars[kind] })

var	fast = ''
for (var x=48; x<967; x+=2)
{
	var sum = 0
	for (var k=0; k<10; k++)	sum += valueAt(mid, Math.max(34, x-k))
	fast += x + ',' + Math.round(sum/10) + ' '
}
add('prices', 'polyline', { class: 'line up', points: slow })
add('prices', 'polyline', { class: 'line down', points: fast })


//
// Buy and sell signals, placed by the arrow tip
//
var	sell = '54,188 65,265 73,295 75,305 87,297 82,317 98,337 115,368 132,402 142,424 148,440 158,415 169,430 182,456 194,484 211,515 235,562 250,519 252,519 269,512 276,515 290,503 295,506 324,556 331,565 336,567 353,585 360,588 371,583 383,584 389,588 402,592 404,592 411,590 414,590 417,590 422,590 435,575 440,575 443,575 448,577 457,574 464,575 472,555 475,554 486,540 517,487 520,492 526,498 537,498 545,508 554,508 565,511 569,515 575,510 588,500 591,500 603,487 631,456 636,457 639,457 653,448 661,450 667,458 677,461 680,461 698,440 707,419 709,422 729,405 739,372 742,372 754,345 767,334 768,334 775,339 789,377 793,377 799,377 834,308 842,301 847,301 850,301 853,301 863,258 865,258 869,216 895,179 903,162 908,161 911,161 914,161 919,153 920,157 932,188 938,228 946,195 956,166 964,175 965,187'
var	buy = '39,288 73,318 79,338 83,330 95,342 109,388 128,422 137,428 139,432 148,453 149,454 168,440 178,474 192,492 210,522 232,571 234,571 237,566 250,527 255,532 267,520 274,524 280,524 294,512 322,562 330,574 333,574 352,594 358,597 361,597 379,594 389,595 398,603 402,600 404,600 413,599 416,599 421,599 437,582 441,583 448,585 463,583 473,563 476,563 493,551 520,499 526,506 532,512 544,517 548,517 562,522 569,523 576,520 589,512 591,510 607,496 632,465 638,465 641,467 659,463 666,466 673,471 678,472 681,472 697,450 708,428 715,433 728,415 738,377 747,378 755,355 767,342 774,347 788,389 791,389 794,389 798,385 822,335 833,317 845,309 848,309 851,309 864,268 876,290 895,187 905,178 910,174 913,172 918,162 929,208 938,235 940,238 947,205 959,195 965,194'
points(buy).forEach(function (p)
{
	add('arrows', 'path', { class: 'buy', d: 'M' + p[0] + ' ' + (p[1]-1) + 'l5 5h-3v8h-4v-8h-3z' })
})
points(sell).forEach(function (p)
{
	add('arrows', 'path', { class: 'sell', d: 'M' + p[0] + ' ' + (p[1]+1) + 'l5-5h-3v-8h-4v8h-3z' })
})


//
// Color palette
//
var	colors = ['#80ff00', '#000000', '#0000ff', '#00ffff', '#00ff00', '#ff00ff', '#ff0000', '#ffff00', '#ffffff', '#000080', '#008080', '#008000', '#800080', '#800000', '#808000', '#808080']
colors.forEach(function (c)
{
	var b = document.createElement('button')
	b.style.backgroundColor = c
	b.setAttribute('aria-label', c)
	if (c == '#ff0000')	b.className = 'selected'
	document.getElementById('palette').appendChild(b)
})
```
